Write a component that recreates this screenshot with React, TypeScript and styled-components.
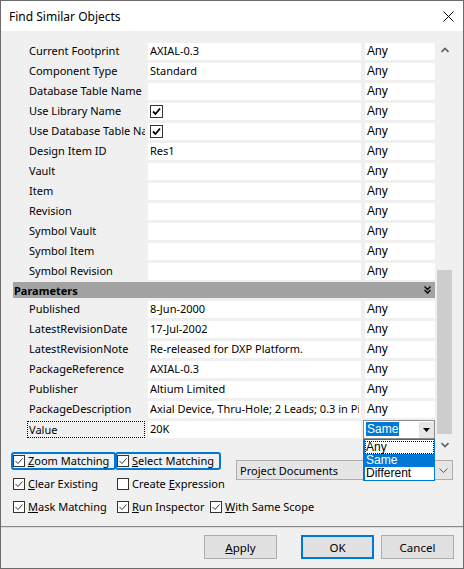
import React from 'react';
import styled, { createGlobalStyle } from 'styled-components';

const Global = createGlobalStyle`
  html, body { margin: 0; padding: 0; background: #ffffff; }
  body { font-family: "Noto Sans", "Open Sans", sans-serif; font-size: 11px; color: #000; }
  * { box-sizing: border-box; }
`;

const Window = styled.div`
  width: 464px;
  height: 569px;
  border: 1px solid #6b6b6b;
  background: #f0f0f0;
  display: flex;
  flex-direction: column;
`;

const TitleBar = styled.div`
  height: 30px;
  background: #ffffff;
  display: flex;
  align-items: center;
  justify-content: space-between;
  padding: 0 9px 0 8px;
  font-size: 12px;
`;

const CloseButton = styled.div`
  width: 12px;
  height: 12px;
  display: flex;
  align-items: center;
  justify-content: center;
`;

const Body = styled.div`
  padding: 10px 10px 0 12px;
`;

const GridWrap = styled.div`
  height: 410px;
  display: flex;
  gap: 1px;
`;

const Grid = styled.div`
  width: 423px;
  display: flex;
  flex-direction: column;
`;

const Row = styled.div`
  height: 20px;
  display: grid;
  grid-template-columns: 131px 213px 70px;
  column-gap: 4px;
  align-items: center;
`;

const Label = styled.div<{ $focused?: boolean }>`
  width: 132px;
  height: 17px;
  line-height: 16px;
  padding-left: 16px;
  white-space: nowrap;
  overflow: hidden;
  ${p => (p.$focused ? 'border: 1px dotted #000; margin-left: 14px; width: 118px; padding-left: 1px;' : '')}
`;

const ValueCell = styled.div`
  height: 17px;
  line-height: 16px;
  background: #ffffff;
  padding-left: 2px;
  white-space: nowrap;
  overflow: hidden;
  display: flex;
  align-items: center;
`;

const ValueText = styled.span`
  display: block;
  overflow: hidden;
  white-space: nowrap;
  max-width: 209px;
`;

const AnyCell = styled.div`
  height: 17px;
  line-height: 17px;
  background: #ffffff;
  padding-left: 2px;
  font-family: "Liberation Sans", Arial, sans-serif;
  font-size: 12px;
`;

const GridCheck = styled.div`
  width: 13px;
  height: 13px;
  border: 1px solid #333;
  background: #fff;
  display: flex;
  align-items: center;
  justify-content: center;
`;

const HeaderRow = styled.div`
  height: 18px;
  padding: 1px 0;
`;

const HeaderBar = styled.div`
  height: 16px;
  background: #a3a3a3;
  display: flex;
  align-items: center;
  justify-content: space-between;
  padding: 0 4px 0 1px;
  font-weight: bold;
`;

const Combo = styled.div`
  position: relative;
  margin-left: -2px;
  width: 72px;
  height: 19px;
  border: 1px solid #8c8c8c;
  background: #fff;
  display: flex;
  align-items: center;
  padding-left: 2px;
`;

const ComboText = styled.span`
  background: #0078d7;
  color: #fff;
  font-family: "Liberation Sans", Arial, sans-serif;
  font-size: 12px;
  line-height: 14px;
  padding: 0 1px;
`;

const ComboButton = styled.div`
  position: absolute;
  right: 0;
  top: 1px;
  width: 15px;
  height: 16px;
  background: #e6e6e6;
  display: flex;
  align-items: center;
  justify-content: center;
`;

const DropList = styled.div`
  position: absolute;
  left: -1px;
  top: 18px;
  width: 72px;
  height: 42px;
  border: 1px solid #0078d7;
  border-left-width: 2px;
  background: #fff;
  z-index: 5;
  font-family: "Liberation Sans", Arial, sans-serif;
  font-size: 12px;
  padding-top: 1px;
`;

const DropItem = styled.div<{ $selected?: boolean; $focus?: boolean }>`
  height: 13px;
  line-height: 13px;
  padding-left: 1px;
  background: ${p => (p.$selected ? '#0078d7' : '#fff')};
  color: ${p => (p.$selected ? '#fff' : '#000')};
  ${p => (p.$focus ? 'outline: 1px dotted #000; outline-offset: -1px;' : '')}
`;

const Scrollbar = styled.div`
  width: 17px;
  height: 412px;
  display: flex;
  flex-direction: column;
  background: #f0f0f0;
`;

const ScrollButton = styled.div`
  height: 17px;
  display: flex;
  align-items: center;
  justify-content: center;
`;

const Track = styled.div`
  flex: 1;
  display: flex;
  flex-direction: column;
  justify-content: flex-end;
  padding: 0 1px 2px 1px;
`;

const Thumb = styled.div`
  height: 164px;
  background: #cdcdcd;
`;

const Options = styled.div`
  display: grid;
  grid-template-columns: 104px 93px 1fr;
  grid-template-rows: 23px 23px 23px;
  padding: 0 10px 0 10px;
  margin-top: -2px;
  font-size: 11px;
`;

const Option = styled.div<{ $focused?: boolean }>`
  display: flex;
  align-items: center;
  align-self: center;
  gap: 3px;
  height: 18px;
  padding-right: 5px;
  border: 2px solid ${p => (p.$focused ? '#0078d7' : 'transparent')};
  border-radius: 3px;
  white-space: nowrap;
  justify-self: start;
`;

const Box = styled.div`
  width: 12px;
  height: 12px;
  border: 1px solid #333;
  background: #fff;
  display: flex;
  align-items: center;
  justify-content: center;
`;

const Select = styled.div`
  grid-column: 3;
  grid-row: 1 / span 2;
  align-self: start;
  margin-top: 11px;
  margin-left: 28px;
  height: 20px;
  border: 1px solid #adadad;
  background: #e5e5e5;
  display: flex;
  align-items: center;
  justify-content: space-between;
  padding: 0 4px 0 3px;
`;

const Footer = styled.div`
  margin-top: 8px;
  height: 40px;
  border-top: 1px solid #8a8a8a;
  box-shadow: inset 0 1px 0 #dadada;
  display: flex;
  justify-content: flex-end;
  align-items: flex-start;
  padding: 8px 9px 0 0;
  gap: 7px;
  font-size: 11.5px;
`;

const Button = styled.div<{ $default?: boolean; $gap?: number }>`
  width: 73px;
  height: 24px;
  background: #e1e1e1;
  border: ${p => (p.$default ? '2px solid #0078d7' : '1px solid #adadad')};
  display: flex;
  align-items: center;
  justify-content: center;
  margin-right: ${p => p.$gap ?? 0}px;
`;

const U = styled.span`
  text-decoration: underline;
`;

const Tick = () => (
  <svg width="9" height="9" viewBox="0 0 9 9">
    <path d="M1 4.5 L3.5 7 L8 1.5" fill="none" stroke="#000" strokeWidth="1.8" />
  </svg>
);

const ThinTick = () => (
  <svg width="10" height="10" viewBox="0 0 10 10">
    <path d="M1.5 5 L4 7.5 L8.5 2.5" fill="none" stroke="#333" strokeWidth="1" />
  </svg>
);

const ChevronUp = () => (
  <svg width="8" height="6" viewBox="0 0 8 6">
    <path d="M0.5 5 L4 1.5 L7.5 5" fill="none" stroke="#606060" strokeWidth="1.6" />
  </svg>
);

const ChevronDown = () => (
  <svg width="8" height="6" viewBox="0 0 8 6">
    <path d="M0.5 1 L4 4.5 L7.5 1" fill="none" stroke="#606060" strokeWidth="1.6" />
  </svg>
);

const DoubleChevron = () => (
  <svg width="7" height="8" viewBox="0 0 7 8">
    <path d="M0.5 0.5 L3.5 3.5 L6.5 0.5 M0.5 4 L3.5 7 L6.5 4" fill="none" stroke="#000" strokeWidth="1.3" />
  </svg>
);

type Item = { label: string; value?: string; check?: boolean };

const general: Item[] = [
  { label: 'Current Footprint', value: 'AXIAL-0.3' },
  { label: 'Component Type', value: 'Standard' },
  { label: 'Database Table Name', value: '' },
  { label: 'Use Library Name', check: true },
  { label: 'Use Database Table Name', check: true },
  { label: 'Design Item ID', value: 'Res1' },
  { label: 'Vault', value: '' },
  { label: 'Item', value: '' },
  { label: 'Revision', value: '' },
  { label: 'Symbol Vault', value: '' },
  { label: 'Symbol Item', value: '' },
  { label: 'Symbol Revision', value: '' },
];

const params: Item[] = [
  { label: 'Published', value: '8-Jun-2000' },
  { label: 'LatestRevisionDate', value: '17-Jul-2002' },
  { label: 'LatestRevisionNote', value: 'Re-released for DXP Platform.' },
  { label: 'PackageReference', value: 'AXIAL-0.3' },
  { label: 'Publisher', value: 'Altium Limited' },
  { label: 'PackageDescription', value: 'Axial Device, Thru-Hole; 2 Leads; 0.3 in Pin Spacing' },
];

const DataRow = ({ item }: { item: Item }) => (
  <Row>
    <Label>{item.label}</Label>
    <ValueCell>
      {item.check ? (
        <GridCheck>
          <Tick />
        </GridCheck>
      ) : (
        <ValueText>{item.value}</ValueText>
      )}
    </ValueCell>
    <AnyCell>Any</AnyCell>
  </Row>
);

const CheckOpt = ({ children, checked = true, focused }: { children: React.ReactNode; checked?: boolean; focused?: boolean }) => (
  <Option $focused={focused}>
    <Box>{checked && <ThinTick />}</Box>
    <span>{children}</span>
  </Option>
);

export default function App() {
  return (
    <>
      <Global />
      <Window>
        <TitleBar>
          <span>Find Similar Objects</span>
          <CloseButton>
            <svg width="11" height="11" viewBox="0 0 11 11">
              <path d="M0.5 0.5 L10.5 10.5 M10.5 0.5 L0.5 10.5" stroke="#000" strokeWidth="1" />
            </svg>
          </CloseButton>
        </TitleBar>
        <Body>
          <GridWrap>
            <Grid>
              {general.map(it => (
                <DataRow key={it.label} item={it} />
              ))}
              <HeaderRow>
                <HeaderBar>
                  <span>Parameters</span>
                  <DoubleChevron />
                </HeaderBar>
              </HeaderRow>
              {params.map(it => (
                <DataRow key={it.label} item={it} />
              ))}
              <Row>
                <Label $focused>Value</Label>
                <ValueCell>20K</ValueCell>
                <Combo>
                  <ComboText>Same</ComboText>
                  <ComboButton>
                    <svg width="7" height="4" viewBox="0 0 7 4">
                      <path d="M0 0 L7 0 L3.5 4 Z" fill="#000" />
                    </svg>
                  </ComboButton>
                  <DropList>
                    <DropItem $focus>Any</DropItem>
                    <DropItem $selected>Same</DropItem>
                    <DropItem>Different</DropItem>
                  </DropList>
                </Combo>
              </Row>
            </Grid>
            <Scrollbar>
              <ScrollButton>
                <ChevronUp />
              </ScrollButton>
              <Track>
                <Thumb />
              </Track>
              <ScrollButton>
                <ChevronDown />
              </ScrollButton>
            </Scrollbar>
          </GridWrap>
        </Body>
        <Options>
          <CheckOpt focused>
            <U>Z</U>oom Matching
          </CheckOpt>
          <CheckOpt focused>
            <U>S</U>elect Matching
          </CheckOpt>
          <Select>
            <span>Project Documents</span>
            <svg width="9" height="5" viewBox="0 0 9 5">
              <path d="M0.5 0.5 L4.5 4.5 L8.5 0.5" fill="none" stroke="#555" strokeWidth="1" />
            </svg>
          </Select>
          <CheckOpt>
            <U>C</U>lear Existing
          </CheckOpt>
          <CheckOpt checked={false}>
            Create <U>E</U>xpression
          </CheckOpt>
          <CheckOpt>
            <U>M</U>ask Matching
          </CheckOpt>
          <CheckOpt>
            <U>R</U>un Inspector
          </CheckOpt>
          <CheckOpt>
            <U>W</U>ith Same Scope
          </CheckOpt>
        </Options>
        <Footer>
          <Button $gap={17}>
            <span>
              <U>A</U>pply
            </span>
          </Button>
          <Button $default>OK</Button>
          <Button>Cancel</Button>
        </Footer>
      </Window>
    </>
  );
}
